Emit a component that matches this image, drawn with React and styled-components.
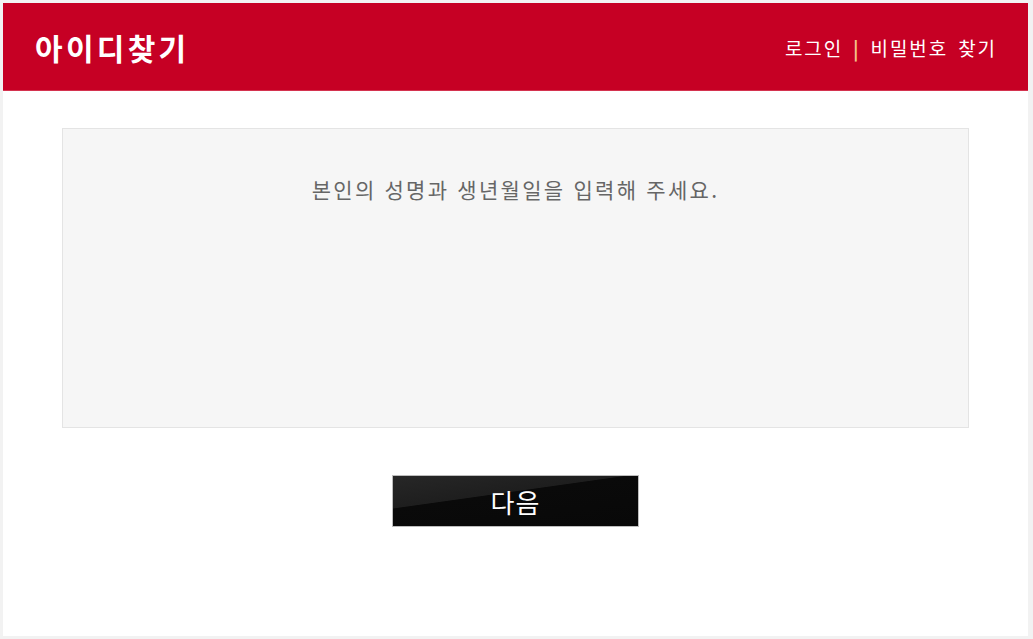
import React from "react";
import styled, { createGlobalStyle } from "styled-components";

const GlobalStyle = createGlobalStyle`
	html, body {
		margin: 0;
		padding: 0;
		background: #f2f2f2;
	}
	body {
		font-family: "Noto Sans CJK KR", "Noto Sans", sans-serif;
	}
`;

const Frame = styled.div`
	width: 1033px;
	height: 639px;
	box-sizing: border-box;
	padding: 3px 5px 3px 3px;
	background: #f2f2f2;
`;
const Panel = styled.div`
	height: 100%;
	background: #fff;
	display: flex;
	flex-direction: column;
`;
const Header = styled.header`
	height: 88px;
	background: #c60024;
	display: flex;
	align-items: center;
	justify-content: space-between;
	padding: 0 31px 0 32px;
	box-shadow: inset 0 -1px 0 #d4334f;
	& > h1 {
		margin: 0;
		color: #fff;
		font-size: 30px;
		font-weight: 700;
		letter-spacing: 3.3px;
	}
`;
const Links = styled.nav`
	display: flex;
	align-items: center;
	gap: 10px;
	color: #fff;
	font-size: 19px;
	letter-spacing: 1.9px;
	word-spacing: 4px;
	& > a {
		color: #fff;
		text-decoration: none;
	}
	& > span {
		color: #f5c08a;
		font-weight: 700;
	}
`;
const Body = styled.main`
	padding: 37px 59px 0 59px;
	display: flex;
	flex-direction: column;
	align-items: center;
`;
const InfoBox = styled.section`
	width: 100%;
	height: 300px;
	box-sizing: border-box;
	background: #f6f6f6;
	border: 1px solid #e4e4e4;
	text-align: center;
	padding-top: 45px;
	& > p {
		margin: 0;
		color: #666;
		font-size: 21px;
		letter-spacing: 2.3px;
		word-spacing: 1px;
	}
`;
const NextButton = styled.button`
	margin-top: 47px;
	width: 247px;
	height: 52px;
	border: 1px solid #bdbdbd;
	background: linear-gradient(172deg, #272727 0%, #1e1e1e 38%, #0a0a0a 39%, #080808 100%);
	color: #fff;
	font-family: inherit;
	font-size: 26px;
	letter-spacing: 1px;
	cursor: pointer;
`;

function App() {
	return (
		<>
			<GlobalStyle />
			<Frame>
				<Panel>
					<Header>
						<h1>아이디찾기</h1>
						<Links>
							<a href="#login">로그인</a>
							<span>|</span>
							<a href="#password">비밀번호 찾기</a>
						</Links>
					</Header>
					<Body>
						<InfoBox>
							<p>본인의 성명과 생년월일을 입력해 주세요.</p>
						</InfoBox>
						<NextButton>다음</NextButton>
					</Body>
				</Panel>
			</Frame>
		</>
	);
}

export default App;
